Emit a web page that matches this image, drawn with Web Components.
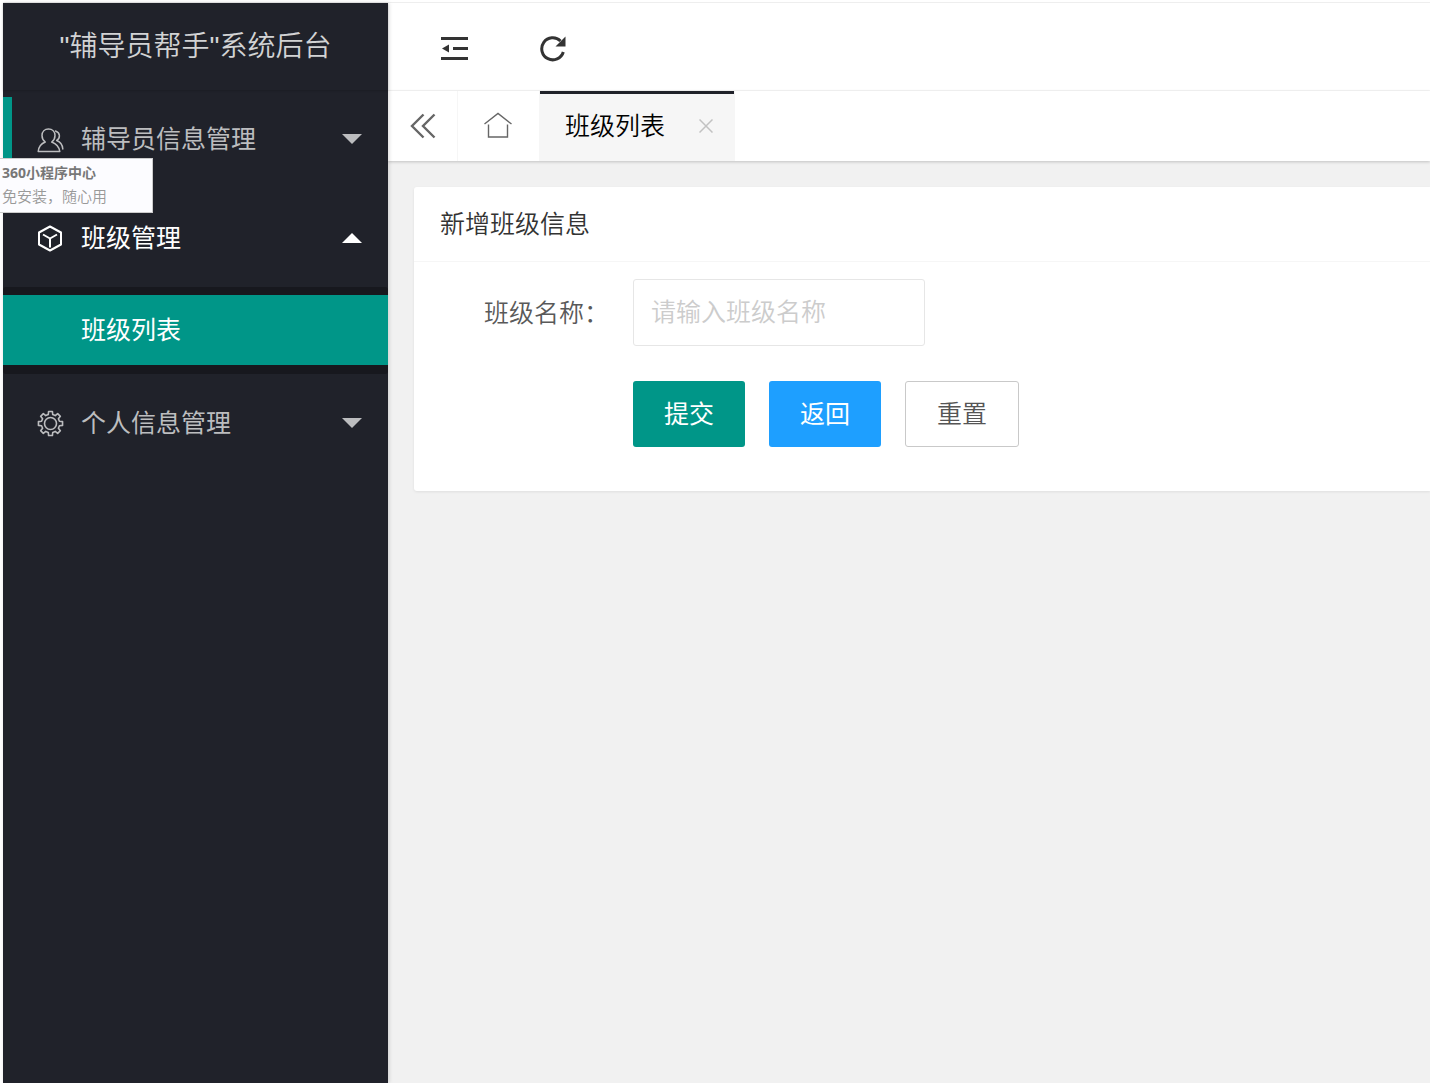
<!DOCTYPE html>
<html lang="zh-CN">
<head>
<meta charset="utf-8">
<title>"辅导员帮手"系统后台</title>
<style>
  html, body { height: 100%; margin: 0; }
  body {
    overflow: hidden;
    background: #fff;
    font-family: "Liberation Sans", "Noto Sans CJK SC", sans-serif;
    font-weight: 350;
    font-size: 25px;
    line-height: 36px;
  }
</style>
</head>
<body>
<admin-shell>
  <side-nav slot="side" heading='"辅导员帮手"系统后台'>
    <nav-item label="辅导员信息管理" icon="users" hovered></nav-item>
    <nav-item label="班级管理" icon="cube" open>
      <nav-child>班级列表</nav-child>
    </nav-item>
    <nav-item label="个人信息管理" icon="gear"></nav-item>
  </side-nav>
  <tool-bar slot="head"></tool-bar>
  <page-tabs slot="head"><page-tab>班级列表</page-tab></page-tabs>
  <panel-card>
    <span slot="title">新增班级信息</span>
    <class-form></class-form>
  </panel-card>
  <desk-tip slot="overlay">
    <span slot="title">360小程序中心</span>
    免安装，随心用
  </desk-tip>
</admin-shell>

<script>
const define = (name, render, after) => customElements.define(name, class extends HTMLElement {
  connectedCallback() {
    if (this.shadowRoot) return;
    this.attachShadow({ mode: 'open' }).innerHTML =
      '<style>*{box-sizing:border-box}a{color:inherit;text-decoration:none}svg{display:block;flex:none}</style>' + render(this);
    if (after) after(this);
  }
});

const gearPath = (() => {
  const pts = [];
  for (let i = 0; i < 8; i++) {
    for (const [r, d] of [[9.2, -14], [12.2, -9], [12.2, 9], [9.2, 14]]) {
      const a = (i * 45 + d) * Math.PI / 180;
      pts.push((13.5 + r * Math.sin(a)).toFixed(2) + ' ' + (14.5 - r * Math.cos(a)).toFixed(2));
    }
  }
  return 'M' + pts.join('L') + 'Z';
})();

const icons = {
  users: `<svg width="27" height="28" viewBox="0 0 27 28" fill="none" stroke="currentColor" stroke-width="1.5" stroke-linejoin="round" stroke-linecap="round">
    <path d="M8.300 17C6 15.300 5 13 5 10.500C5 6.500 7.800 4 11.500 4S18 6.500 18 10.500C18 13 17 15.300 14.700 17C19 18.600 22 21 22.800 26.500H1.200C1.800 21 4 18.600 8.300 17Z"/>
    <path d="M18.500 6C23.500 8 23.500 13 19.700 15.500C23.500 17 25.600 20 25.800 24"/></svg>`,
  cube: `<svg width="27" height="28" viewBox="0 0 27 28" fill="none" stroke="currentColor" stroke-width="2" stroke-linejoin="round">
    <path d="M13 2.500L24 8.500V20.500L13 26.500L2 20.500V8.500Z"/><path d="M6 10.500L13 14.500L20 10.500M13 14.500V23.500"/></svg>`,
  gear: `<svg width="27" height="28" viewBox="0 0 27 28" fill="none" stroke="currentColor" stroke-width="1.600" stroke-linejoin="round">
    <path d="${gearPath}"/><circle cx="13.500" cy="14.500" r="6"/></svg>`
};

define('admin-shell', () => `
  <style>
    :host { display: flex; height: 100%; padding: 2px 0 0 3px; position: relative; box-sizing: border-box; }
    .frame { flex: 1; display: flex; min-width: 0; border-top: 1px solid #eee; }
    .main { flex: 1; min-width: 0; display: flex; flex-direction: column; background: #f1f1f1; }
    main { flex: 1; padding: 26px 0 0 26px; }
  </style>
  <div class="frame">
    <slot name="side"></slot>
    <div class="main"><slot name="head"></slot><main><slot></slot></main></div>
  </div>
  <slot name="overlay"></slot>`);

define('side-nav', el => `
  <style>
    :host { display: block; flex: 0 0 385px; background: #20222a; color: #bcbdbf; box-shadow: 1px 0 4px rgba(0,0,0,.15); position: relative; z-index: 2; }
    header { height: 87px; display: flex; align-items: center; justify-content: center; font-size: 28px; color: #d2d3d4; box-shadow: 0 1px 2px rgba(0,0,0,.15); }
  </style>
  <header>${el.getAttribute('heading')}</header>
  <nav><slot></slot></nav>`);

define('nav-item', el => `
  <style>
    :host { display: block; position: relative; margin-bottom: 1px; font-weight: 400; }
    :host([open]) { color: #fff; margin-bottom: 0; }
    a { display: flex; align-items: center; height: 98px; padding: 0 26px 0 34px; }
    .label { flex: 1; padding-left: 17px; }
    .arrow { width: 20px; height: 10px; background: currentColor; clip-path: polygon(0 0, 100% 0, 50% 100%); }
    :host([open]) .arrow { clip-path: polygon(50% 0, 100% 100%, 0 100%); }
    :host([hovered])::before { content: ""; position: absolute; left: 0; top: 7px; width: 9px; height: 98px; background: #009688; }
    .children { background: #17181e; padding: 8px 0 9px; border-radius: 3px; }
    :host(:not([open])) .children { display: none; }
  </style>
  <a href="#">${icons[el.getAttribute('icon')]}<span class="label">${el.getAttribute('label')}</span><span class="arrow"></span></a>
  <div class="children"><slot></slot></div>`);

define('nav-child', () => `
  <style>
    :host { display: block; }
    a { display: flex; align-items: center; height: 70px; padding-left: 78px; background: #009688; color: #fff; }
  </style>
  <a href="#"><slot></slot></a>`);

define('tool-bar', () => `
  <style>
    :host { display: flex; gap: 72px; align-items: center; height: 88px; padding: 4px 0 0 53px; background: #fff; border-bottom: 1px solid #f6f6f6; box-sizing: border-box; color: #333; }
  </style>
  <a href="#" aria-label="侧边伸缩"><svg width="27" height="27" viewBox="0 0 27 27" fill="currentColor"><path d="M0 2H27V5H0ZM12 12H27V15H12ZM0 22H27V25H0ZM1 13.500L8 9.500V17.500Z"/></svg></a>
  <a href="#" aria-label="刷新"><svg width="27" height="27" viewBox="0 0 27 27"><path d="M23.300 17A11 11 0 1 1 20.500 6" fill="none" stroke="currentColor" stroke-width="3"/><path d="M25.500 1.500V11.500H15.500Z" fill="currentColor"/></svg></a>`);

define('page-tabs', () => `
  <style>
    :host { display: flex; height: 70px; background: #fff; box-shadow: 0 1px 3px rgba(0,0,0,.2); position: relative; z-index: 1; color: #555; }
    a { display: flex; align-items: center; justify-content: center; }
    .prev { width: 70px; border-right: 1px solid #f6f6f6; }
    .home { width: 81px; padding: 0 1px 2px 0; }
  </style>
  <a class="prev" href="#" aria-label="上一页"><svg width="26" height="26" viewBox="0 0 26 26" fill="none" stroke="#666" stroke-width="2.400"><path d="M13.500 1.500L2 13L13.500 24.500M24.500 1.500L13 13L24.500 24.500"/></svg></a>
  <a class="home" href="#" aria-label="主页"><svg width="28" height="26" viewBox="0 0 28 26" fill="none" stroke="#666" stroke-width="1.400"><path d="M.5 12L14 1.500L27.500 12M4.500 12.500V25H23.500V12.500"/></svg></a>
  <slot></slot>`);

define('page-tab', () => `
  <style>
    :host { display: flex; align-items: center; gap: 34px; padding: 0 22px 0 26px; background: #f6f6f6; color: #000; position: relative; }
    :host::before { content: ""; position: absolute; left: 1px; right: 1px; top: 0; height: 3px; background: #20222a; }
    button { border: 0; padding: 0; background: none; }
  </style>
  <a href="#"><slot></slot></a>
  <button type="button" aria-label="关闭"><svg width="14" height="14" viewBox="0 0 14 14" stroke="#c2c2c2" stroke-width="1.500"><path d="M.5 .5L13.500 13.500M13.500 .5L.5 13.500"/></svg></button>`);

define('panel-card', () => `
  <style>
    :host { display: block; background: #fff; border-radius: 3px 0 0 3px; box-shadow: 0 1px 3px rgba(0,0,0,.08); }
    header { height: 75px; display: flex; align-items: center; padding-left: 26px; border-bottom: 1px solid #f6f6f6; color: #333; }
    .body { padding: 17px 26px 44px; }
  </style>
  <header><slot name="title"></slot></header>
  <div class="body"><slot></slot></div>`);

define('class-form', () => `
  <style>
    :host { display: block; color: #595959; }
    form { display: grid; grid-template-columns: 193px 1fr; row-gap: 35px; align-items: center; }
    label { padding-left: 44px; white-space: nowrap; }
    input, button { font: inherit; border-radius: 3px; }
    input { width: 292px; height: 67px; padding: 0 17px; border: 1px solid #e6e6e6; color: #333; background: #fff; outline: 0; }
    input::placeholder { color: #ccc; opacity: 1; }
    .actions { grid-column: 2; display: flex; gap: 24px; }
    button { height: 66px; padding: 0 31px; border: 0; background: #009688; color: #fff; font-weight: 400; }
    .back { background: #1e9fff; }
    .reset { border: 1px solid #c9c9c9; background: #fff; color: #555; font-weight: 350; }
  </style>
  <form>
    <label for="name">班级名称：</label>
    <input id="name" type="text" placeholder="请输入班级名称">
    <div class="actions">
      <button type="submit">提交</button>
      <button type="button" class="back">返回</button>
      <button type="reset" class="reset">重置</button>
    </div>
  </form>`, el => el.shadowRoot.querySelector('form').addEventListener('submit', e => e.preventDefault()));

define('desk-tip', () => `
  <style>
    :host { display: block; position: absolute; left: 0; top: 158px; z-index: 3; width: 153px; box-sizing: border-box; padding: 2px 2px 3px; background: #fcfcff; border: solid #ccc; border-width: 1px 1px 1px 0; font-size: 15px; line-height: 24px; color: #999; white-space: nowrap; }
    .title { font-family: "Noto Sans", "Noto Sans CJK SC", sans-serif; font-size: 14px; font-weight: 700; color: #777; }
  </style>
  <div class="title"><slot name="title"></slot></div>
  <slot></slot>`);
</script>
</body>
</html>
